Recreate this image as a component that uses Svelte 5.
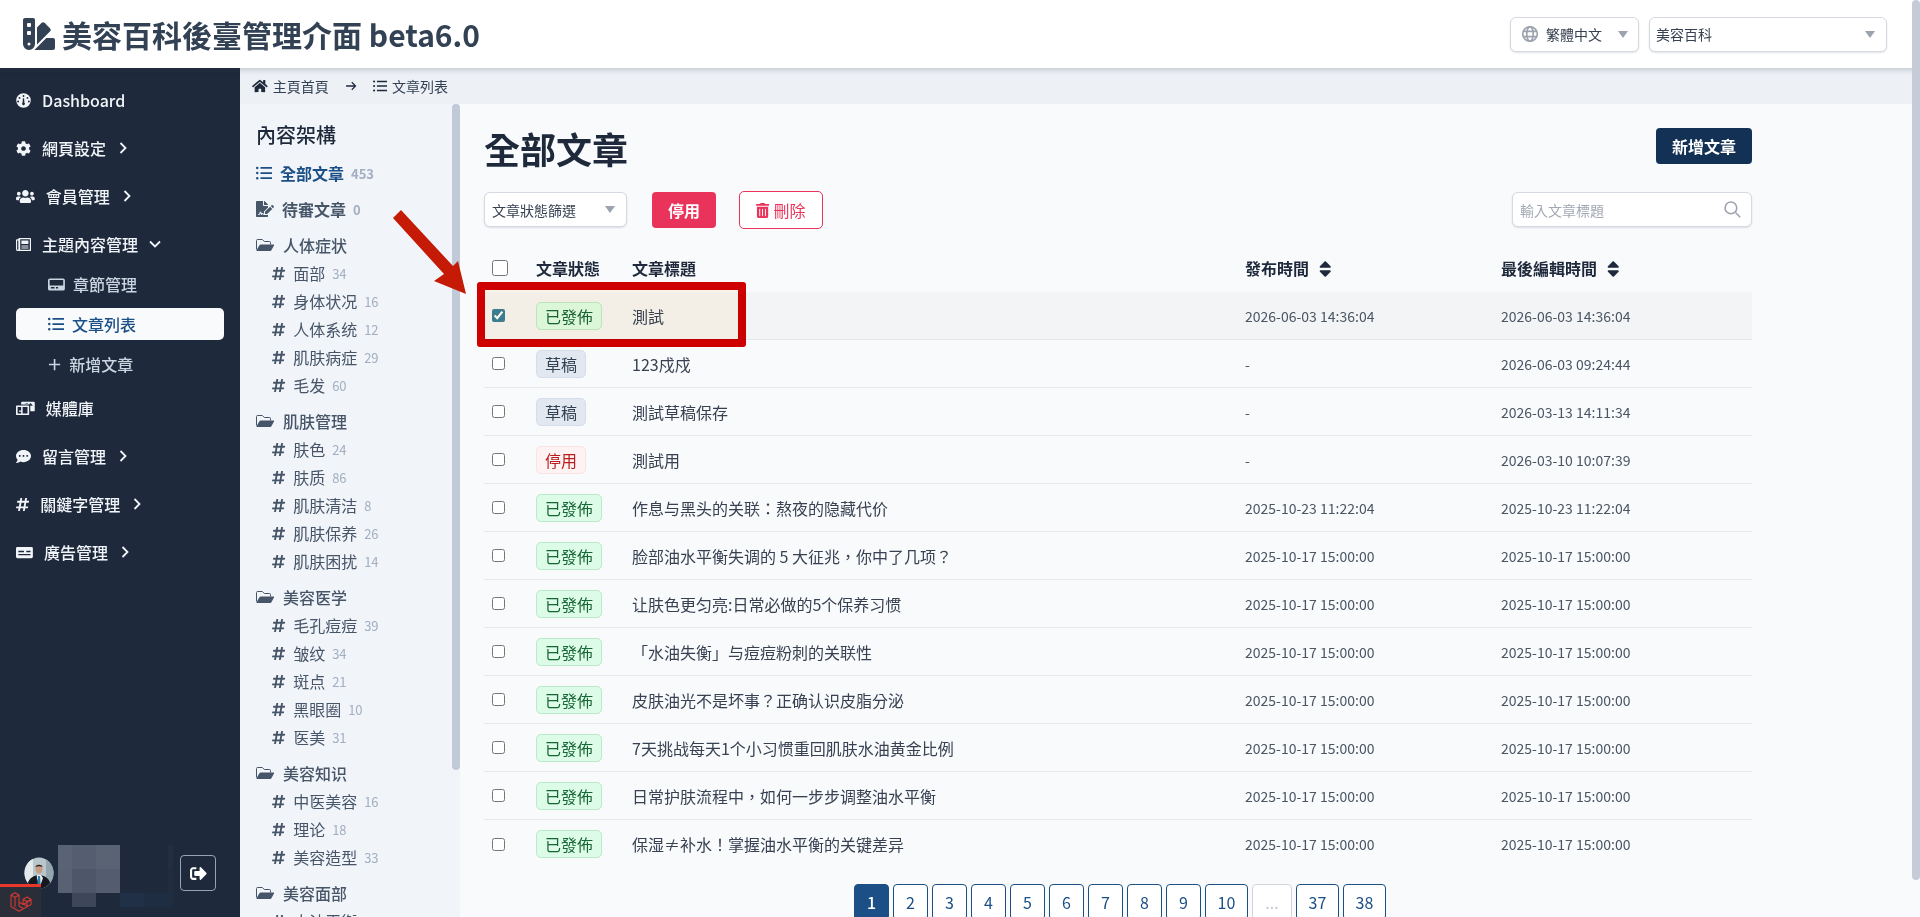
<script>
  const icons = {
    swatch: ['0 0 512 512', '<path d="M434.66,167.71h0L344.5,77.36a31.83,31.83,0,0,0-45-.07h0l-.07.07L224,152.88V424L434.66,212.9A32,32,0,0,0,434.66,167.71ZM480,320H373.09L186.68,506.51c-2.06,2.07-4.5,3.58-6.68,5.49H480a32,32,0,0,0,32-32V352A32,32,0,0,0,480,320ZM192,32A32,32,0,0,0,160,0H32A32,32,0,0,0,0,32V416a96,96,0,0,0,192,0ZM96,440a24,24,0,1,1,24-24A24,24,0,0,1,96,440Zm32-184a16,16,0,0,1-16,16H80a16,16,0,0,1-16-16V224a16,16,0,0,1,16-16h32a16,16,0,0,1,16,16Zm0-128a16,16,0,0,1-16,16H80a16,16,0,0,1-16-16V96A16,16,0,0,1,80,80h32a16,16,0,0,1,16,16Z"/>'],
    gauge: ['0 0 512 512', '<path fill-rule="evenodd" d="M256 8a248 248 0 1 0 0 496 248 248 0 0 0 0-496zm0 64a32 32 0 1 1 0 64 32 32 0 0 1 0-64zM120 136a32 32 0 1 1 0 64 32 32 0 0 1 0-64zm272 0a32 32 0 1 1 0 64 32 32 0 0 1 0-64zM72 256a32 32 0 1 1 0 64 32 32 0 0 1 0-64zm368 0a32 32 0 1 1 0 64 32 32 0 0 1 0-64zM236 180h40l12 150a48 48 0 1 1-64 0z"/>'],
    cog: ['0 0 512 512', '<path d="M487.4 315.7l-42.6-24.6c4.3-23.2 4.3-47 0-70.2l42.6-24.6c4.9-2.8 7.1-8.6 5.5-14-11.1-35.6-30-67.8-54.7-94.6-3.8-4.1-10-5.1-14.8-2.3L380.8 110c-17.9-15.4-38.5-27.3-60.8-35.1V25.8c0-5.6-3.9-10.5-9.4-11.7-36.7-8.2-74.3-7.8-109.2 0-5.5 1.2-9.4 6.1-9.4 11.7V75c-22.2 7.9-42.8 19.8-60.8 35.1L88.7 85.5c-4.9-2.8-11-1.9-14.8 2.3-24.7 26.7-43.6 58.9-54.7 94.6-1.7 5.4.6 11.2 5.5 14L67.3 221c-4.3 23.2-4.3 47 0 70.2l-42.6 24.6c-4.9 2.8-7.1 8.6-5.5 14 11.1 35.6 30 67.8 54.7 94.6 3.8 4.1 10 5.1 14.8 2.3l42.6-24.6c17.9 15.4 38.5 27.3 60.8 35.1v49.2c0 5.6 3.9 10.5 9.4 11.7 36.7 8.2 74.3 7.8 109.2 0 5.5-1.2 9.4-6.1 9.4-11.7v-49.2c22.2-7.9 42.8-19.8 60.8-35.1l42.6 24.6c4.9 2.8 11 1.9 14.8-2.3 24.7-26.7 43.6-58.9 54.7-94.6 1.5-5.5-.7-11.3-5.6-14.1zM256 336c-44.1 0-80-35.9-80-80s35.9-80 80-80 80 35.9 80 80-35.9 80-80 80z"/>'],
    users: ['0 0 640 512', '<path d="M96 224c35.3 0 64-28.7 64-64s-28.7-64-64-64-64 28.7-64 64 28.7 64 64 64zm448 0c35.3 0 64-28.7 64-64s-28.7-64-64-64-64 28.7-64 64 28.7 64 64 64zm32 32h-64c-17.6 0-33.5 7.1-45.1 18.6 40.3 22.1 68.9 62 75.1 109.4h66c17.7 0 32-14.3 32-32v-32c0-35.3-28.7-64-64-64zm-256 0c61.9 0 112-50.1 112-112S381.9 32 320 32 208 82.1 208 144s50.1 112 112 112zm76.8 32h-8.3c-20.8 10-43.9 16-68.5 16s-47.6-6-68.5-16h-8.3C179.6 288 128 339.6 128 403.2V432c0 26.5 21.5 48 48 48h288c26.5 0 48-21.5 48-48v-28.8c0-63.6-51.6-115.2-115.2-115.2zm-223.7-13.4C161.5 263.1 145.6 256 128 256H64c-35.3 0-64 28.7-64 64v32c0 17.7 14.3 32 32 32h65.9c6.3-47.4 34.9-87.3 75.2-109.4z"/>'],
    paper: ['0 0 512 512', '<path fill-rule="evenodd" d="M112 32h368a32 32 0 0 1 32 32v384a32 32 0 0 1-32 32H64a64 64 0 0 1-64-64V112a32 32 0 0 1 32-32h48V64a32 32 0 0 1 32-32zM40 120v296a24 24 0 0 0 40 16V120zm104-40v352h328V80zm40 40h240v120H184zm0 168h240v32H184zm0 72h240v32H184z"/>'],
    hdd: ['0 0 576 512', '<path fill-rule="evenodd" d="M64 48h448a64 64 0 0 1 64 64v288a64 64 0 0 1-64 64H64a64 64 0 0 1-64-64V112a64 64 0 0 1 64-64zm-8 64v176h464V112a8 8 0 0 0-8-8H64a8 8 0 0 0-8 8zm48 232a8 8 0 0 0-8 8v32a8 8 0 0 0 8 8h112a8 8 0 0 0 8-8v-32a8 8 0 0 0-8-8zm176 0a8 8 0 0 0-8 8v32a8 8 0 0 0 8 8h56a8 8 0 0 0 8-8v-32a8 8 0 0 0-8-8z"/>'],
    list: ['0 0 512 512', '<path d="M40 52a40 40 0 1 0 0 80 40 40 0 0 0 0-80zm0 164a40 40 0 1 0 0 80 40 40 0 0 0 0-80zm0 164a40 40 0 1 0 0 80 40 40 0 0 0 0-80zM144 66h368v54H144zm0 164h368v54H144zm0 164h368v54H144z"/>'],
    plus: ['0 0 448 512', '<path d="M196 64h56v164h164v56H252v164h-56V284H32v-56h164z"/>'],
    images: ['0 0 640 512', '<path fill-rule="evenodd" d="M208 24h400a32 32 0 0 1 32 32v264a32 32 0 0 1-32 32H488V168a48 48 0 0 0-48-48H176V56a32 32 0 0 1 32-32zm70 76h150l70 60h80l-80-90-60 50-50-40zM32 152h384a32 32 0 0 1 32 32v264a32 32 0 0 1-32 32H32a32 32 0 0 1-32-32V184a32 32 0 0 1 32-32zm24 56v216h120v-56h-70v-40h70v-120zm170 0v216h166V208z"/>'],
    comment: ['0 0 512 512', '<path d="M256 32C114.6 32 0 125.1 0 240c0 49.6 21.4 95 57 130.7C44.5 421.1 2.7 466 2.2 466.5c-2.2 2.3-2.8 5.7-1.5 8.7S4.8 480 8 480c66.3 0 116-31.8 140.6-51.4 32.7 12.3 69 19.4 107.4 19.4 141.4 0 256-93.1 256-208S397.4 32 256 32zM128 272c-17.7 0-32-14.3-32-32s14.3-32 32-32 32 14.3 32 32-14.3 32-32 32zm128 0c-17.7 0-32-14.3-32-32s14.3-32 32-32 32 14.3 32 32-14.3 32-32 32zm128 0c-17.7 0-32-14.3-32-32s14.3-32 32-32 32 14.3 32 32-14.3 32-32 32z"/>'],
    hash: ['0 0 448 512', '<path fill-rule="evenodd" d="M440.667 182.109l7.143-40c1.313-7.355-4.342-14.109-11.813-14.109h-74.81l14.623-81.891C377.123 38.754 371.468 32 363.997 32h-40.632a12 12 0 0 0-11.813 9.891L296.175 128H197.54l14.623-81.891C213.477 38.754 207.822 32 200.35 32h-40.632a12 12 0 0 0-11.813 9.891L132.528 128H53.432a12 12 0 0 0-11.813 9.891l-7.143 40C33.163 185.246 38.818 192 46.289 192h74.81L98.242 320H19.146a12 12 0 0 0-11.813 9.891l-7.143 40C-1.123 377.246 4.532 384 12.003 384h74.81L72.19 465.891C70.877 473.246 76.532 480 84.003 480h40.632a12 12 0 0 0 11.813-9.891L151.825 384h98.634l-14.623 81.891C234.523 473.246 240.178 480 247.65 480h40.632a12 12 0 0 0 11.813-9.891L315.472 384h79.096a12 12 0 0 0 11.813-9.891l7.143-40c1.313-7.355-4.342-14.109-11.813-14.109h-74.81l22.857-128h79.096a12 12 0 0 0 11.813-9.891zM261.889 320h-98.634l22.857-128h98.634l-22.857 128z"/>'],
    ad: ['0 0 576 512', '<path fill-rule="evenodd" d="M48 64h480a48 48 0 0 1 48 48v288a48 48 0 0 1-48 48H48a48 48 0 0 1-48-48V112a48 48 0 0 1 48-48zm32 136v48h192v-48zm0 104v48h416v-48zm272-104v48h144v-48z"/>'],
    signout: ['0 0 512 512', '<path d="M497 273L329 441c-15 15-41 4.5-41-17v-96H152c-13.3 0-24-10.7-24-24v-96c0-13.3 10.7-24 24-24h136V88c0-21.4 25.9-32 41-17l168 168c9.3 9.4 9.3 24.6 0 34zM192 436v-40c0-6.6-5.4-12-12-12H96c-17.7 0-32-14.3-32-32V160c0-17.7 14.3-32 32-32h84c6.6 0 12-5.4 12-12V76c0-6.6-5.4-12-12-12H96c-53 0-96 43-96 96v192c0 53 43 96 96 96h84c6.6 0 12-5.4 12-12z"/>'],
    home: ['0 0 576 512', '<path d="M280.37 148.26L96 300.11V464a16 16 0 0 0 16 16l112.06-.29a16 16 0 0 0 15.92-16V368a16 16 0 0 1 16-16h64a16 16 0 0 1 16 16v95.64a16 16 0 0 0 16 16.05L464 480a16 16 0 0 0 16-16V300L295.67 148.26a12.19 12.19 0 0 0-15.3 0zM571.6 251.47L488 182.56V44.05a12 12 0 0 0-12-12h-56a12 12 0 0 0-12 12v72.61L318.47 43a48 48 0 0 0-61 0L4.34 251.47a12 12 0 0 0-1.6 16.9l25.5 31A12 12 0 0 0 45.15 301l235.22-193.74a12.19 12.19 0 0 1 15.3 0L530.9 301a12 12 0 0 0 16.9-1.6l25.5-31a12 12 0 0 0-1.7-16.93z"/>'],
    arrow: ['0 0 448 512', '<path d="M40 232h288L232 136l32-32 152 152-152 152-32-32 96-96H40z"/>'],
    sign: ['0 0 576 512', '<path d="M218.17 424.14c-2.95-5.92-8.09-6.52-10.17-6.52s-7.22.59-10.02 6.19l-7.67 15.34c-6.37 12.78-25.03 11.37-29.48-2.09L144 386.59l-10.61 31.88c-5.89 17.66-22.38 29.53-41 29.53H80c-8.84 0-16-7.16-16-16s7.16-16 16-16h12.39c4.83 0 9.11-3.08 10.64-7.66l18.19-54.64c3.3-9.81 12.44-16.41 22.78-16.41s19.48 6.59 22.77 16.41l13.88 41.64c19.75-16.19 54.06-9.7 66 14.16 1.89 3.78 5.49 5.95 9.36 6.26v-82.12l128-127.09V160H248c-13.2 0-24-10.8-24-24V0H24C10.7 0 0 10.7 0 24v464c0 13.3 10.7 24 24 24h336c13.3 0 24-10.7 24-24v-40l-128-.11c-16.12-.31-30.58-9.28-37.83-23.75zM384 121.9c0-6.3-2.5-12.4-7-16.9L279.1 7c-4.5-4.5-10.6-7-17-7H256v128h128zm-96 225.06V416h68.99l161.68-162.78-67.88-67.88L288 346.96zm280.54-179.63l-31.87-31.87c-9.94-9.94-26.07-9.94-36.01 0l-27.25 27.25 67.88 67.88 27.25-27.25c9.95-9.94 9.95-26.07 0-36.01z"/>'],
    folder: ['0 0 576 512', '<path fill="none" stroke="currentColor" stroke-width="32" d="M16 400V112a32 32 0 0 1 32-32h154l64 64h166a32 32 0 0 1 32 32v64"/><path d="M152 240h416c12 0 18 12 12 22L492 420a56 56 0 0 1-48 28H28c-12 0-18-12-12-22l88-158a56 56 0 0 1 48-28z"/>'],
    trash: ['0 0 448 512', '<path d="M32 464a48 48 0 0 0 48 48h288a48 48 0 0 0 48-48V128H32zm272-256a16 16 0 0 1 32 0v224a16 16 0 0 1-32 0zm-96 0a16 16 0 0 1 32 0v224a16 16 0 0 1-32 0zm-96 0a16 16 0 0 1 32 0v224a16 16 0 0 1-32 0zM432 32H312l-9.4-18.7A24 24 0 0 0 281.1 0H166.8a23.72 23.72 0 0 0-21.4 13.3L136 32H16A16 16 0 0 0 0 48v32a16 16 0 0 0 16 16h416a16 16 0 0 0 16-16V48a16 16 0 0 0-16-16z"/>'],
    sort: ['0 0 320 512', '<path d="M41 288h238c21.4 0 32.1 25.9 17 41L177 448c-9.4 9.4-24.6 9.4-33.9 0L24 329c-15.1-15.1-4.4-41 17-41zm255-105L177 64c-9.4-9.4-24.6-9.4-33.9 0L24 183c-15.1 15.1-4.4 41 17 41h238c21.4 0 32.1-25.9 17-41z"/>'],
    globe: ['0 0 512 512', '<circle cx="256" cy="256" r="232" fill="none" stroke="currentColor" stroke-width="52"/><ellipse cx="256" cy="256" rx="104" ry="232" fill="none" stroke="currentColor" stroke-width="52"/><path d="M24 146h464v52H24zm0 168h464v52H24z"/>'],
    search: ['0 0 512 512', '<circle cx="208" cy="208" r="176" fill="none" stroke="currentColor" stroke-width="48"/><path d="M330 362l32-32 142 142-32 32z"/>']
  };

  const nav = [
    { icon: 'gauge', label: 'Dashboard' },
    { icon: 'cog', label: '網頁設定', arrow: 'right' },
    { icon: 'users', label: '會員管理', arrow: 'right' },
    { icon: 'paper', label: '主題內容管理', arrow: 'down', children: [
      { icon: 'hdd', label: '章節管理' },
      { icon: 'list', label: '文章列表', active: true },
      { icon: 'plus', label: '新增文章' }
    ] },
    { icon: 'images', label: '媒體庫' },
    { icon: 'comment', label: '留言管理', arrow: 'right' },
    { icon: 'hash', label: '關鍵字管理', arrow: 'right' },
    { icon: 'ad', label: '廣告管理', arrow: 'right' }
  ];

  const groups = [
    { name: '人体症状', items: [['面部', 34], ['身体状况', 16], ['人体系统', 12], ['肌肤病症', 29], ['毛发', 60]] },
    { name: '肌肤管理', items: [['肤色', 24], ['肤质', 86], ['肌肤清洁', 8], ['肌肤保养', 26], ['肌肤困扰', 14]] },
    { name: '美容医学', items: [['毛孔痘痘', 39], ['皱纹', 34], ['斑点', 21], ['黑眼圈', 10], ['医美', 31]] },
    { name: '美容知识', items: [['中医美容', 16], ['理论', 18], ['美容造型', 33]] },
    { name: '美容面部', items: [['水油平衡', 30]] }
  ];

  const published = { text: '已發佈', cls: 'green' };
  const draft = { text: '草稿', cls: 'gray' };
  const disabled = { text: '停用', cls: 'red' };
  const oct = '2025-10-17 15:00:00';

  const rows = [
    { status: published, title: '測試', pub: '2026-06-03 14:36:04', edit: '2026-06-03 14:36:04', checked: true },
    { status: draft, title: '123戍戍', pub: '-', edit: '2026-06-03 09:24:44' },
    { status: draft, title: '測試草稿保存', pub: '-', edit: '2026-03-13 14:11:34' },
    { status: disabled, title: '測試用', pub: '-', edit: '2026-03-10 10:07:39' },
    { status: published, title: '作息与黑头的关联：熬夜的隐藏代价', pub: '2025-10-23 11:22:04', edit: '2025-10-23 11:22:04' },
    { status: published, title: '脸部油水平衡失调的 5 大征兆，你中了几项？', pub: oct, edit: oct },
    { status: published, title: '让肤色更匀亮:日常必做的5个保养习惯', pub: oct, edit: oct },
    { status: published, title: '「水油失衡」与痘痘粉刺的关联性', pub: oct, edit: oct },
    { status: published, title: '皮肤油光不是坏事？正确认识皮脂分泌', pub: oct, edit: oct },
    { status: published, title: '7天挑战每天1个小习惯重回肌肤水油黄金比例', pub: oct, edit: oct },
    { status: published, title: '日常护肤流程中，如何一步步调整油水平衡', pub: oct, edit: oct },
    { status: published, title: '保湿≠补水！掌握油水平衡的关键差异', pub: oct, edit: oct }
  ];

  const pages = ['1', '2', '3', '4', '5', '6', '7', '8', '9', '10', '...', '37', '38'];
  const mosaic = [
    ['#596374', 14], ['#555e70', 24], ['#5a6374', 24], ['transparent', 48], ['#242e40', 5],
    ['#586273', 14], ['#4d5769', 24], ['#545d6f', 24], ['transparent', 48], ['#222c3e', 5]
  ];
</script>

{#snippet icon(name, cls = '')}
  <svg class="icon {cls}" viewBox={icons[name][0]} fill="currentColor">{@html icons[name][1]}</svg>
{/snippet}

{#snippet caret()}
  <span class="caret"></span>
{/snippet}

<div class="app">
  <header class="topbar">
    <div class="brand">
      {@render icon('swatch', 'logo')}
      <span>美容百科後臺管理介面 beta6.0</span>
    </div>
    <div class="top-selects">
      <div class="select lang">
        {@render icon('globe', 'globe')}
        <span>繁體中文</span>
        {@render caret()}
      </div>
      <div class="select site">
        <span>美容百科</span>
        {@render caret()}
      </div>
    </div>
  </header>

  <div class="body">
    <aside class="sidebar">
      <nav>
        {#each nav as item}
          <div class="nav-item">
            {@render icon(item.icon)}
            <span>{item.label}</span>
            {#if item.arrow === 'right'}
              <svg class="chev" viewBox="0 0 8 12"><path d="M1.5 1l5 5-5 5" /></svg>
            {:else if item.arrow === 'down'}
              <svg class="chev down" viewBox="0 0 12 8"><path d="M1 1.5l5 5 5-5" /></svg>
            {/if}
          </div>
          {#if item.children}
            <div class="sub-list">
              {#each item.children as child}
                <div class="sub-item" class:active={child.active}>
                  <div class="sub-inner">
                    {@render icon(child.icon)}
                    <span>{child.label}</span>
                  </div>
                </div>
              {/each}
            </div>
          {/if}
        {/each}
      </nav>

      <div class="user">
        <svg class="avatar" viewBox="0 0 30 32">
          <defs><clipPath id="av"><ellipse cx="15" cy="16" rx="14.5" ry="15.5" /></clipPath></defs>
          <g clip-path="url(#av)">
            <rect width="30" height="32" fill="#b9c6cc" />
            <rect x="0" y="0" width="9" height="32" fill="#e4eaec" />
            <rect x="22" y="0" width="8" height="32" fill="#93a5ad" />
            <path d="M3 32c0-9 4-13 12-14 8 1 12 5 12 14z" fill="#15181f" />
            <path d="M13 18h4l2 3-3.200 9-3-9z" fill="#e8eef0" />
            <path d="M14 19h2l.6 8-1.600 2-1.600-2z" fill="#2f7cad" />
            <ellipse cx="15" cy="12" rx="3.600" ry="4.600" fill="#c79c82" />
            <path d="M11.400 10c.4-3 6.800-3 7.200 0-2-1-5.200-1-7.200 0z" fill="#2c2420" />
          </g>
        </svg>
        <div class="blur">
          {#each mosaic as [bg, w]}
            <i style="background:{bg};width:{w}px"></i>
          {/each}
          <i class="low" style="background:#3d4759;width:24px;margin-left:14px"></i>
          <i class="low" style="background:transparent;width:24px"></i>
          <i class="low" style="background:#1f3047;width:24px"></i>
          <i class="low" style="background:#1f2d42;width:29px"></i>
        </div>
        <button class="logout" aria-label="登出">{@render icon('signout')}</button>
      </div>

      <div class="debugbar">
        <svg viewBox="0 0 24 24" fill="none" stroke="#d13a32" stroke-width="1.1" stroke-linejoin="round">
          <path d="M2 5l4-2.300L10 5v11l4 2.300M2 5v11.500l8 4.800 12-6.900v-4.600l-8 4.600-4-2.300M6 7.300L2 5M6 7.300l4-2.300M6 7.300V17M14 9.200l4-2.300 4 2.300v4.600M14 9.200v4.600l4 2.200M14 9.200l4 2.300 4-2.300M18 11.500v4.500" />
        </svg>
      </div>
    </aside>

    <div class="content">
      <div class="crumbs">
        {@render icon('home')}
        <span>主頁首頁</span>
        {@render icon('arrow', 'crumb-arrow')}
        {@render icon('list')}
        <span>文章列表</span>
      </div>

      <div class="panes">
        <section class="tree">
          <h3>內容架構</h3>
          <div class="tree-top selected">
            {@render icon('list')}
            <span>全部文章</span>
            <em>453</em>
          </div>
          <div class="tree-top">
            {@render icon('sign')}
            <span>待審文章</span>
            <em>0</em>
          </div>
          {#each groups as group}
            <div class="tree-group">
              {@render icon('folder')}
              <span>{group.name}</span>
            </div>
            <div class="tree-items">
              {#each group.items as [name, count]}
                <div class="tree-item">
                  {@render icon('hash')}
                  <span>{name}</span>
                  <em>{count}</em>
                </div>
              {/each}
            </div>
          {/each}
          <div class="tree-thumb"></div>
        </section>

        <main class="main">
          <div class="title-row">
            <h1>全部文章</h1>
            <button class="btn primary">新增文章</button>
          </div>

          <div class="tools">
            <div class="select filter">
              <span>文章狀態篩選</span>
              {@render caret()}
            </div>
            <button class="btn danger">停用</button>
            <button class="btn outline">{@render icon('trash')}刪除</button>
            <div class="select search">
              <span>輸入文章標題</span>
              {@render icon('search')}
            </div>
          </div>

          <table>
            <colgroup>
              <col style="width:52px" /><col style="width:96px" /><col style="width:613px" /><col style="width:256px" /><col />
            </colgroup>
            <thead>
              <tr>
                <th><input type="checkbox" class="head-check" /></th>
                <th>文章狀態</th>
                <th>文章標題</th>
                <th>發布時間{@render icon('sort', 'sort')}</th>
                <th>最後編輯時間{@render icon('sort', 'sort')}</th>
              </tr>
            </thead>
            <tbody>
              {#each rows as row}
                <tr class:hover={row.checked}>
                  <td><input type="checkbox" checked={row.checked} /></td>
                  <td><span class="badge {row.status.cls}">{row.status.text}</span></td>
                  <td class="name">{row.title}</td>
                  <td class="date">{row.pub}</td>
                  <td class="date">{row.edit}</td>
                </tr>
              {/each}
            </tbody>
          </table>

          <div class="pager">
            {#each pages as p, i}
              <span class="page" class:current={i === 0} class:wide={p.length > 1} class:dots={p === '...'}>{p}</span>
            {/each}
          </div>

          <!-- red annotation on top of the screenshot -->
          <div class="mark"></div>
          <svg class="mark-arrow" viewBox="0 0 90 100">
            <polygon points="11,6 63,62 68,57 76,90 44,77 54,70 3,14" fill="#c41a06" />
          </svg>
        </main>
      </div>
    </div>
  </div>

  <div class="page-scroll"></div>
</div>

<style>
  :global(body) {
    margin: 0;
    font-family: "Noto Sans CJK TC", "Noto Sans", sans-serif;
    background: #f8fafc;
  }

  .app {
    position: relative;
    width: 1920px;
    height: 917px;
    overflow: hidden;
    display: flex;
    flex-direction: column;
  }

  .icon {
    height: 15px;
    flex: none;
    display: block;
  }

  .topbar {
    position: relative;
    z-index: 2;
    height: 68px;
    flex: none;
    background: #fff;
    box-shadow: 0 2px 5px rgba(51, 65, 85, 0.22);
    display: flex;
    align-items: center;
    justify-content: space-between;
    padding: 0 33px 0 23px;
  }

  .brand {
    display: flex;
    align-items: center;
    gap: 7px;
    font-size: 30px;
    font-weight: 700;
    color: #334155;
    white-space: nowrap;
  }

  .brand :global(.logo) {
    height: 32px;
  }

  .top-selects {
    display: flex;
    gap: 10px;
  }

  .select {
    height: 35px;
    box-sizing: border-box;
    background: #fff;
    border: 1px solid #d5d9e2;
    border-radius: 6px;
    box-shadow: 0 1px 2px rgba(15, 23, 42, 0.12);
    display: flex;
    align-items: center;
    font-size: 14px;
    color: #374151;
  }

  .caret {
    width: 0;
    height: 0;
    border-left: 5.5px solid transparent;
    border-right: 5.5px solid transparent;
    border-top: 7px solid #9ca3af;
    margin-left: auto;
  }

  .lang {
    width: 129px;
    padding: 0 10px 0 11px;
  }

  .lang :global(.globe) {
    height: 16px;
    color: #9ca3af;
    margin-right: 8px;
  }

  .site {
    width: 238px;
    padding: 0 11px 0 6px;
  }

  .body {
    flex: 1;
    min-height: 0;
    display: flex;
  }

  .sidebar {
    position: relative;
    width: 240px;
    flex: none;
    background: #1e293b;
    color: #f1f5f9;
    display: flex;
    flex-direction: column;
    justify-content: space-between;
  }

  nav {
    padding-top: 8px;
  }

  .nav-item {
    height: 48px;
    display: flex;
    align-items: center;
    gap: 11px;
    padding-left: 16px;
    font-size: 16px;
    font-weight: 500;
  }

  .chev {
    width: 8px;
    height: 12px;
    margin-left: 2px;
    fill: none;
    stroke: #f1f5f9;
    stroke-width: 1.8;
  }

  .chev.down {
    width: 12px;
    height: 8px;
    margin-left: 0;
  }

  .sub-list {
    margin-top: -4px;
  }

  .sub-item {
    height: 40px;
    padding: 4px 16px;
    box-sizing: border-box;
    font-size: 16px;
    font-weight: 500;
    color: #cbd5e1;
  }

  .sub-inner {
    height: 32px;
    display: flex;
    align-items: center;
    gap: 8px;
    padding-left: 32px;
    border-radius: 5px;
  }

  .sub-item.active .sub-inner {
    background: #f8fafc;
    color: #1b4f86;
  }

  .sub-item.active :global(.icon) {
    height: 16px;
  }

  .user {
    display: flex;
    align-items: flex-start;
    height: 72px;
    padding-left: 24px;
    position: relative;
  }

  .avatar {
    width: 30px;
    height: 32px;
    flex: none;
    margin-top: 12px;
  }

  .blur {
    width: 120px;
    margin-left: 4px;
    display: flex;
    flex-wrap: wrap;
  }

  .blur i {
    height: 24px;
    display: block;
  }

  .blur i.low {
    height: 14px;
  }

  .logout {
    position: absolute;
    left: 180px;
    top: 10px;
    width: 36px;
    height: 36px;
    padding: 0;
    background: transparent;
    border: 1px solid #94a3b8;
    border-radius: 4px;
    color: #fff;
    display: flex;
    align-items: center;
    justify-content: center;
  }

  .logout :global(.icon) {
    height: 17px;
  }

  .debugbar {
    position: absolute;
    left: 0;
    bottom: 0;
    width: 41px;
    height: 33px;
    box-sizing: border-box;
    background: #2a2e38;
    border-top: 3px solid #e8382c;
    display: flex;
    align-items: center;
    justify-content: center;
  }

  .debugbar svg {
    width: 24px;
    height: 24px;
  }

  .content {
    flex: 1;
    min-width: 0;
    display: flex;
    flex-direction: column;
  }

  .crumbs {
    height: 36px;
    flex: none;
    box-sizing: border-box;
    background: #edf0f5;
    display: flex;
    align-items: center;
    padding-left: 12px;
    font-size: 14px;
    color: #334155;
  }

  .crumbs :global(.icon) {
    color: #1e293b;
    height: 14px;
    margin-right: 5px;
  }

  .crumbs :global(.crumb-arrow) {
    margin: 0 16px;
  }

  .panes {
    flex: 1;
    min-height: 0;
    display: flex;
  }

  .tree {
    position: relative;
    width: 220px;
    flex: none;
    box-sizing: border-box;
    background: #f1f5f9;
    padding: 16px 0 0 16px;
    overflow: hidden;
    color: #475569;
  }

  .tree h3 {
    margin: 0 0 5px;
    height: 30px;
    line-height: 30px;
    font-size: 20px;
    font-weight: 500;
    color: #1e293b;
  }

  .tree-top {
    height: 36px;
    display: flex;
    align-items: center;
    gap: 8px;
    font-size: 16px;
    font-weight: 700;
  }

  .tree-top.selected {
    color: #1b4f86;
  }

  .tree-top em,
  .tree-item em {
    font-style: normal;
    font-size: 13px;
    font-weight: 400;
    color: #a3aec2;
    margin-left: -1px;
  }

  .tree-top em {
    font-weight: 700;
  }

  .tree-group {
    height: 28px;
    margin-top: 8px;
    display: flex;
    align-items: center;
    gap: 9px;
    font-size: 16px;
    font-weight: 500;
  }

  .tree-top + .tree-group {
    margin-top: 4px;
  }

  .tree-group :global(.icon),
  .tree-top :global(.icon) {
    height: 16px;
  }

  .tree-item {
    height: 28px;
    display: flex;
    align-items: center;
    gap: 8px;
    padding-left: 16px;
    font-size: 16px;
  }

  .tree-thumb {
    position: absolute;
    top: 0;
    right: 0;
    width: 8px;
    height: 666px;
    border-radius: 4px;
    background: #c1cad8;
  }

  .main {
    position: relative;
    flex: 1;
    min-width: 0;
    box-sizing: border-box;
    padding: 24px 168px 0 24px;
    background: #f8fafc;
  }

  .title-row {
    display: flex;
    justify-content: space-between;
    align-items: flex-start;
    height: 64px;
  }

  h1 {
    margin: 0;
    font-size: 36px;
    line-height: 40px;
    font-weight: 700;
    color: #1e293b;
  }

  .btn {
    font-family: inherit;
    font-size: 16px;
    font-weight: 700;
    border-radius: 4px;
    border: none;
    height: 36px;
    padding: 0 16px;
    display: inline-flex;
    align-items: center;
    justify-content: center;
    white-space: nowrap;
  }

  .primary {
    background: #123155;
    color: #fff;
  }

  .tools {
    display: flex;
    align-items: center;
    height: 36px;
    gap: 24px;
  }

  .tools .select {
    align-self: flex-start;
  }

  .filter {
    width: 143px;
    padding: 0 11px 0 7px;
    box-sizing: border-box;
  }

  .danger {
    width: 64px;
    background: #ea335a;
    color: #fff;
    margin-left: 1px;
  }

  .outline {
    width: 84px;
    height: 38px;
    padding: 0;
    background: #fff;
    border: 1px solid #ea335a;
    color: #ea335a;
    font-weight: 400;
    gap: 4px;
    margin-left: -1px;
    border-radius: 5px;
  }

  .outline :global(.icon) {
    height: 15px;
  }

  .search {
    width: 240px;
    margin-left: auto;
    padding: 0 10px 0 7px;
    justify-content: space-between;
    color: #a3a9b4;
  }

  .search :global(.icon) {
    height: 17px;
    color: #9ca3af;
  }

  table {
    width: 100%;
    margin-top: 16px;
    border-collapse: separate;
    border-spacing: 0;
    table-layout: fixed;
  }

  th {
    height: 48px;
    padding: 0;
    text-align: left;
    font-size: 16px;
    font-weight: 700;
    color: #1e293b;
  }

  th:first-child,
  td:first-child {
    padding-left: 8px;
  }

  th :global(.sort) {
    display: inline-block;
    height: 20px;
    margin-left: 10px;
    vertical-align: -4px;
    color: #1e293b;
  }

  td {
    height: 48px;
    box-sizing: border-box;
    padding: 0;
    border-bottom: 1px solid #e5e7eb;
    font-size: 16px;
    color: #374151;
  }

  tbody tr:last-child td {
    border-bottom: none;
  }

  tr.hover td {
    background: #f3f4f6;
  }

  input[type="checkbox"] {
    display: block;
    margin: 0;
    accent-color: #3b7f9a;
  }

  .head-check {
    width: 16px;
    height: 16px;
  }

  .badge {
    display: inline-block;
    height: 28px;
    line-height: 26px;
    box-sizing: border-box;
    padding: 0 8px;
    border-radius: 5px;
    border: 1px solid;
    vertical-align: middle;
  }

  .green {
    background: #dcfce7;
    border-color: #bbe9cb;
    color: #166534;
  }

  .gray {
    background: #e2e8f0;
    border-color: #d5dde8;
    color: #334155;
  }

  .red {
    background: #fef2f2;
    border-color: #fee2e2;
    color: #b91c1c;
  }

  .date {
    font-size: 14px;
    color: #4b5563;
  }

  .pager {
    display: flex;
    justify-content: center;
    gap: 4px;
    margin-top: 16px;
    padding-left: 4px;
  }

  .page {
    width: 35px;
    height: 36px;
    box-sizing: border-box;
    border: 1px solid #1b4f86;
    border-radius: 4px;
    background: #fff;
    color: #1b4f86;
    font-size: 16px;
    display: flex;
    align-items: center;
    justify-content: center;
  }

  .page.wide {
    width: 43px;
  }

  .page.current {
    background: #1b4f86;
    color: #fff;
    font-weight: 500;
  }

  .page.dots {
    width: 40px;
    border-color: #d1d5db;
    color: #c4c9d1;
  }

  .mark {
    position: absolute;
    left: 17px;
    top: 178px;
    width: 269px;
    height: 65px;
    box-sizing: border-box;
    border: 8px solid #d40000;
    border-radius: 3px;
    background: #fff9ef;
    background-clip: padding-box;
    mix-blend-mode: multiply;
    pointer-events: none;
  }

  .mark-arrow {
    position: absolute;
    left: -70px;
    top: 100px;
    width: 90px;
    height: 100px;
    overflow: visible;
  }

  .page-scroll {
    position: absolute;
    z-index: 3;
    top: 0;
    right: 0;
    width: 8px;
    height: 880px;
    border-radius: 4px;
    background: #c5ccd8;
  }
</style>
